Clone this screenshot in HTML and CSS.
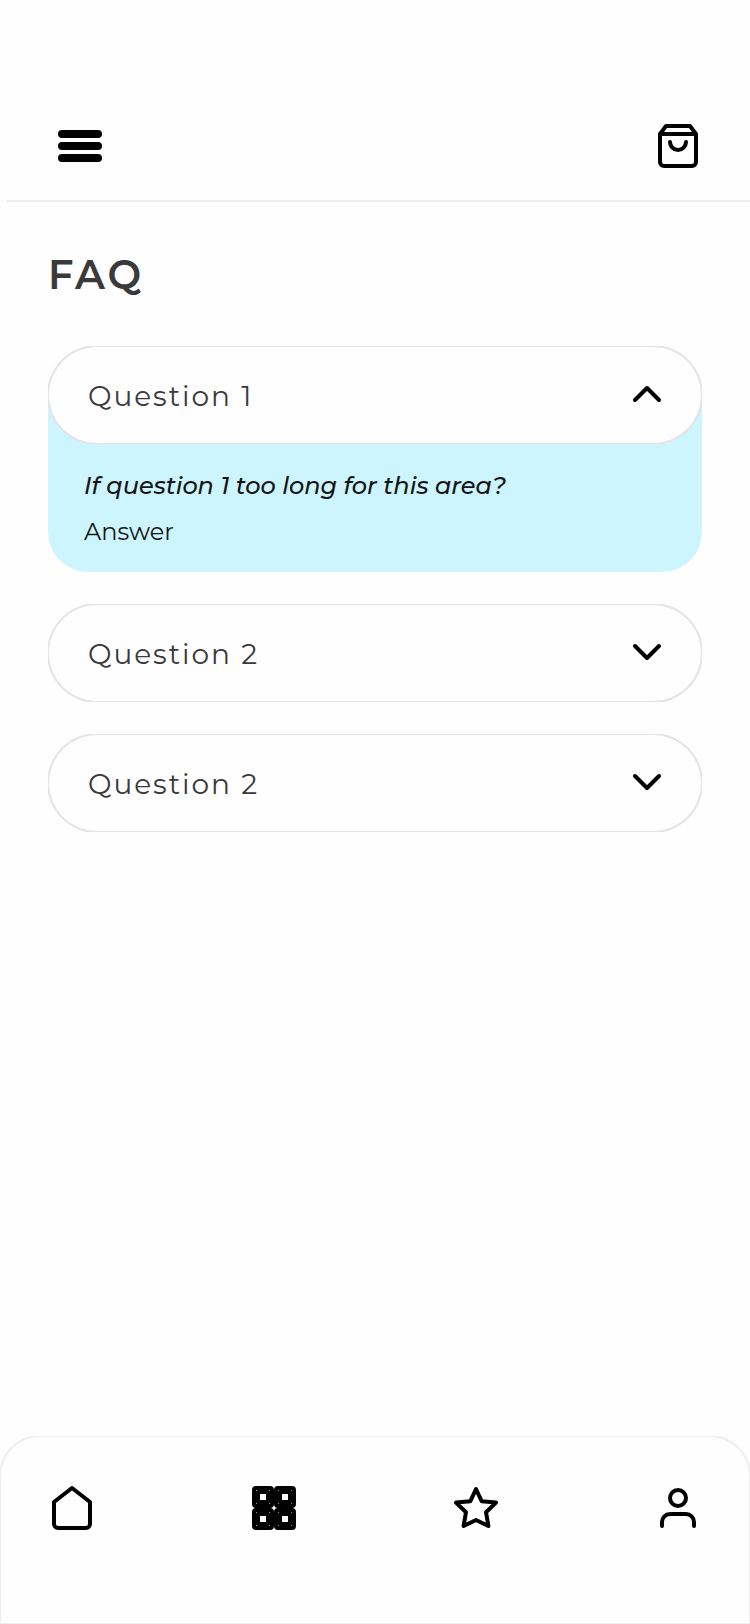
FILE: index.html
```html
<!DOCTYPE html>
<html lang="en">
<head>
<meta charset="utf-8">
<title>FAQ</title>
<link rel="stylesheet" href="styles.css">
</head>
<body>
<div class="screen">
  <header class="topbar">
    <svg class="icon" viewBox="0 0 48 48"><path d="M6 12H42M6 24H42M6 36H42" stroke-width="8"/></svg>
    <svg class="icon" viewBox="0 0 48 48"><path d="M12 4L6 12V40a4 4 0 0 0 4 4H38a4 4 0 0 0 4-4V12L36 4ZM6 12H42M32 20a8 8 0 0 1-16 0"/></svg>
  </header>
  <main class="content">
    <h1 class="title">FAQ</h1>
    <section class="faq">
      <article class="item open">
        <div class="question"><span>Question 1</span><svg class="icon" viewBox="0 0 48 48"><path d="M12 30L24 18L36 30"/></svg></div>
        <div class="answer"><p class="lead">If question 1 too long for this area?</p><p class="reply">Answer</p></div>
      </article>
      <article class="item">
        <div class="question"><span>Question 2</span><svg class="icon" viewBox="0 0 48 48"><path d="M12 18L24 30L36 18"/></svg></div>
      </article>
      <article class="item">
        <div class="question"><span>Question 2</span><svg class="icon" viewBox="0 0 48 48"><path d="M12 18L24 30L36 18"/></svg></div>
      </article>
    </section>
  </main>
  <nav class="tabbar">
    <svg class="icon" viewBox="0 0 48 48"><path d="M6 18L24 4L42 18V40a4 4 0 0 1-4 4H10a4 4 0 0 1-4-4Z"/></svg>
    <svg class="icon" viewBox="0 0 48 48">
      <defs><g id="tile"><rect x="6" y="6" width="14" height="14" stroke-width="8"/><path class="dots" d="M6 6h1v1h-1zM19 6h1v1h-1zM6 19h1v1h-1zM19 19h1v1h-1z"/></g></defs>
      <use href="#tile"/><use href="#tile" x="22"/><use href="#tile" y="22"/><use href="#tile" x="22" y="22"/>
    </svg>
    <svg class="icon" viewBox="0 0 48 48"><path d="M24 5L29.6 17.2L44 18.6L34 28.2L36.4 42L24 36L11.6 42L14 28.2L4 18.6L18.4 17.2Z"/></svg>
    <svg class="icon" viewBox="0 0 48 48"><circle cx="24" cy="14" r="8"/><path d="M8 42V38a8 8 0 0 1 8-8H32a8 8 0 0 1 8 8V42"/></svg>
  </nav>
</div>
</body>
</html>
```
FILE: styles.css
```css
* { box-sizing: border-box; margin: 0; padding: 0; }
body { background: #fefefe; font-family: Montserrat, Inter, sans-serif; }
.screen { display: flex; flex-direction: column; height: 1624px; width: 750px; }
.icon { display: block; width: 48px; height: 48px; flex: none; fill: none; stroke: #000; stroke-width: 4; stroke-linecap: round; stroke-linejoin: round; }
.topbar { display: flex; justify-content: space-between; align-items: flex-end; height: 202px; margin-left: 7px; padding: 0 48px 30px 49px; border-bottom: 2px solid #eee; }
.content { flex: 1; padding: 48px 48px 0; }
.title { height: 96px; font-size: 40px; line-height: 50px; font-weight: 600; letter-spacing: .07em; color: #3a3a3a; }
.faq { display: flex; flex-direction: column; gap: 32px; }
.open { border-radius: 0 0 40px 40px; background: linear-gradient(transparent 49px, #ccf5ff 49px); }
.question { display: flex; align-items: center; justify-content: space-between; height: 98px; padding: 0 30px 2px 39px; border: 1px solid #e4e4e4; border-radius: 49px; box-shadow: 0 0 0 1px #e4e4e4; clip-path: inset(0); background: #fefefe; font-size: 28px; font-weight: 400; letter-spacing: .07em; color: #3a3a3a; }
.question span { padding-top: 4px; }
.answer { height: 128px; padding: 24px 36px 0; color: #151515; }
.lead { font-size: 24px; line-height: 36px; font-weight: 500; font-style: italic; }
.reply { margin-top: 10px; font-size: 24px; line-height: 36px; font-weight: 400; }
.tabbar { display: flex; justify-content: space-between; align-items: flex-start; height: 188px; padding: 47px 47px 0; border: 1px solid #eee; border-radius: 40px 40px 0 0; box-shadow: 0 0 0 1px #eee; clip-path: inset(0); background: #fefefe; }
.dots { fill: #999; stroke: none; }
```
